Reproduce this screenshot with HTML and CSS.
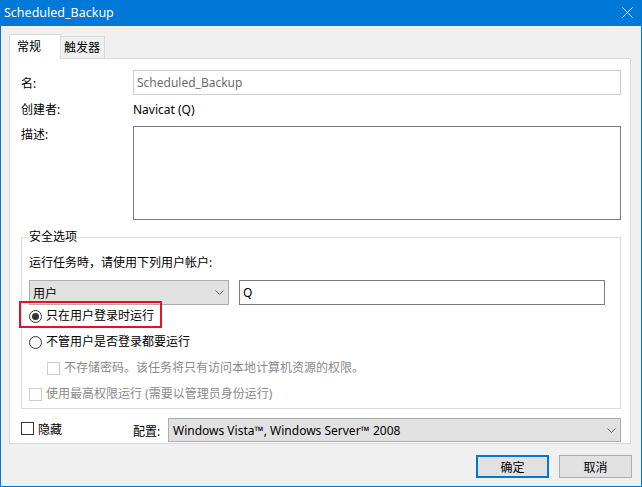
FILE: index.html
```html
<!DOCTYPE html>
<html lang="zh-CN">
<head>
<meta charset="utf-8">
<title>Scheduled_Backup</title>
<link rel="stylesheet" href="styles.css">
</head>
<body>
<div class="window">
  <div class="titlebar">
    <span class="title">Scheduled_Backup</span>
    <svg class="close" width="11" height="11" viewBox="0 0 11 11"><path d="M0.5 0.5 L10.5 10.5 M10.5 0.5 L0.5 10.5" stroke="#fff" stroke-width="1" fill="none"/></svg>
  </div>
  <div class="client">
    <div class="tabs">
      <div class="tab active">常规</div>
      <div class="tab">触发器</div>
    </div>
    <div class="panel">
      <div class="row row-name">
        <span class="lbl">名:</span>
        <div class="input disabled">Scheduled_Backup</div>
      </div>
      <div class="row row-creator">
        <span class="lbl">创建者:</span>
        <span class="val">Navicat (Q)</span>
      </div>
      <div class="row row-desc">
        <span class="lbl lbl-top">描述:</span>
        <div class="textarea"></div>
      </div>
      <fieldset class="group">
        <legend>安全选项</legend>
        <div class="g-line">运行任务時，请使用下列用户帐户:</div>
        <div class="user-row">
          <div class="select user"><span>用户</span><svg class="chev" width="9" height="5" viewBox="0 0 9 5"><path d="M0.5 0.5 L4.5 4.5 L8.5 0.5" stroke="#606060" stroke-width="1" fill="none"/></svg></div>
          <div class="input q">Q</div>
        </div>
        <div class="opts">
          <div class="opt highlighted">
            <span class="radio checked"></span><span>只在用户登录时运行</span>
            <span class="redbox"></span>
          </div>
          <div class="opt"><span class="radio"></span><span>不管用户是否登录都要运行</span></div>
          <div class="opt sub dim"><span class="check dis"></span><span>不存储密码。该任务将只有访问本地计算机资源的权限。</span></div>
          <div class="opt dim"><span class="check dis"></span><span>使用最高权限运行 (需要以管理员身份运行)</span></div>
        </div>
      </fieldset>
      <div class="bottom-row">
        <div class="hide"><span class="check"></span><span>隐藏</span></div>
        <span class="cfg-lbl">配置:</span>
        <div class="select cfg"><span>Windows Vista™, Windows Server™ 2008</span><svg class="chev" width="9" height="5" viewBox="0 0 9 5"><path d="M0.5 0.5 L4.5 4.5 L8.5 0.5" stroke="#606060" stroke-width="1" fill="none"/></svg></div>
      </div>
    </div>
    <div class="buttons">
      <div class="btn default">确定</div>
      <div class="btn">取消</div>
    </div>
  </div>
</div>
</body>
</html>
```
FILE: styles.css
```css
* { box-sizing: border-box; }
html, body { margin: 0; padding: 0; }
body {
  background: #f0f0f0;
  font-family: "Noto Sans", "Noto Sans CJK SC", sans-serif;
  font-size: 12px;
  color: #000;
}
.window {
  width: 642px;
  height: 487px;
  border: 1px solid #0078d7;
  border-top: none;
  background: #f0f0f0;
  display: flex;
  flex-direction: column;
}
.titlebar {
  height: 26px;
  background: #0078d7;
  color: #fff;
  display: flex;
  align-items: center;
  justify-content: space-between;
  padding: 0 9px 1px 3px;
  margin: 0 -1px;
}
.title { font-size: 12.5px; line-height: 16px; padding-left: 1px; }
.close { display: block; margin-top: -1px; }
.client {
  padding: 8px 10px 0 8px;
}
.tabs {
  display: flex;
  align-items: flex-end;
  height: 24px;
}
.tab {
  border: 1px solid #d9d9d9;
  border-bottom: none;
  line-height: 18px;
  height: 22px;
  width: 44px;
  border-left: none;
  padding-left: 3px;
  padding-top: 2px;
  background: #f0f0f0;
}
.tab.active {
  width: 52px;
  height: 25px;
  margin-bottom: -1px;
  border-left: 1px solid #d9d9d9;
  background: #fff;
  padding-left: 7px;
  padding-top: 3px;
  position: relative;
  z-index: 1;
}
.panel {
  width: 622px;
  background: #fff;
  border: 1px solid #d9d9d9;
  padding: 11px 9px 1px 11px;
}
.row { display: flex; align-items: center; }
.lbl { width: 112px; flex: none; }
.lbl-top { align-self: flex-start; line-height: 18px; }
.row-name { height: 25px; }
.row-creator { height: 24px; margin: 2px 0 5px; }
.input {
  border: 1px solid #7a7a7a;
  background: #fff;
  height: 25px;
  line-height: 23px;
  padding-left: 3px;
  flex: 1;
}
.input.disabled { border-color: #cccccc; color: #6d6d6d; }
.textarea {
  flex: 1;
  height: 94px;
  border: 1px solid #7a7a7a;
}
.group {
  margin: 9px 0 0;
  border: 1px solid #dcdcdc;
  padding: 0 15px 6px 7px;
  min-width: 0;
}
.group legend {
  padding: 0;
  line-height: 16px;
}
.g-line { line-height: 16px; margin-top: 10px; }
.user-row {
  display: flex;
  gap: 10px;
  margin-top: 9px;
}
.select {
  background: #e1e1e1;
  border: 1px solid #adadad;
  display: flex;
  align-items: center;
  justify-content: space-between;
  padding: 0 4px 0 3px;
}
.select.user { width: 200px; height: 25px; }
.input.q { height: 25px; }
.chev { display: block; flex: none; }
.opts {
  display: flex;
  flex-direction: column;
  gap: 10px;
  margin-top: 3px;
}
.opt {
  display: flex;
  align-items: center;
  gap: 4px;
  line-height: 16px;
  height: 16px;
  position: relative;
}
.opt.sub { padding-left: 18px; }
.dim { color: #8a8a8a; }
.radio {
  width: 13px; height: 13px;
  border: 1px solid #333;
  border-radius: 50%;
  flex: none;
  display: flex;
  align-items: center;
  justify-content: center;
}
.radio.checked::after {
  content: "";
  width: 7px; height: 7px;
  border-radius: 50%;
  background: #333;
}
.check {
  width: 13px; height: 13px;
  border: 1px solid #333;
  flex: none;
}
.check.dis { border-color: #cccccc; }
.redbox {
  position: absolute;
  left: -10px;
  top: -7px;
  width: 143px;
  height: 27px;
  border: 2px solid #e81123;
  pointer-events: none;
}
.bottom-row {
  display: flex;
  align-items: center;
  margin-top: 9px;
  height: 24px;
}
.hide {
  width: 112px;
  flex: none;
  display: flex;
  align-items: center;
  gap: 4px;
  margin-top: -3px;
}
.cfg-lbl { width: 35px; flex: none; margin-top: 2px; }
.select.cfg { flex: 1; height: 24px; padding-left: 4px; padding-right: 4px; }
.buttons {
  display: flex;
  justify-content: flex-end;
  gap: 10px;
  margin-top: 11px;
  margin-right: -1px;
}
.btn {
  width: 73px;
  height: 23px;
  background: #e1e1e1;
  border: 1px solid #adadad;
  display: flex;
  align-items: center;
  justify-content: center;
}
.btn.default { border: 2px solid #0078d7; }
```
